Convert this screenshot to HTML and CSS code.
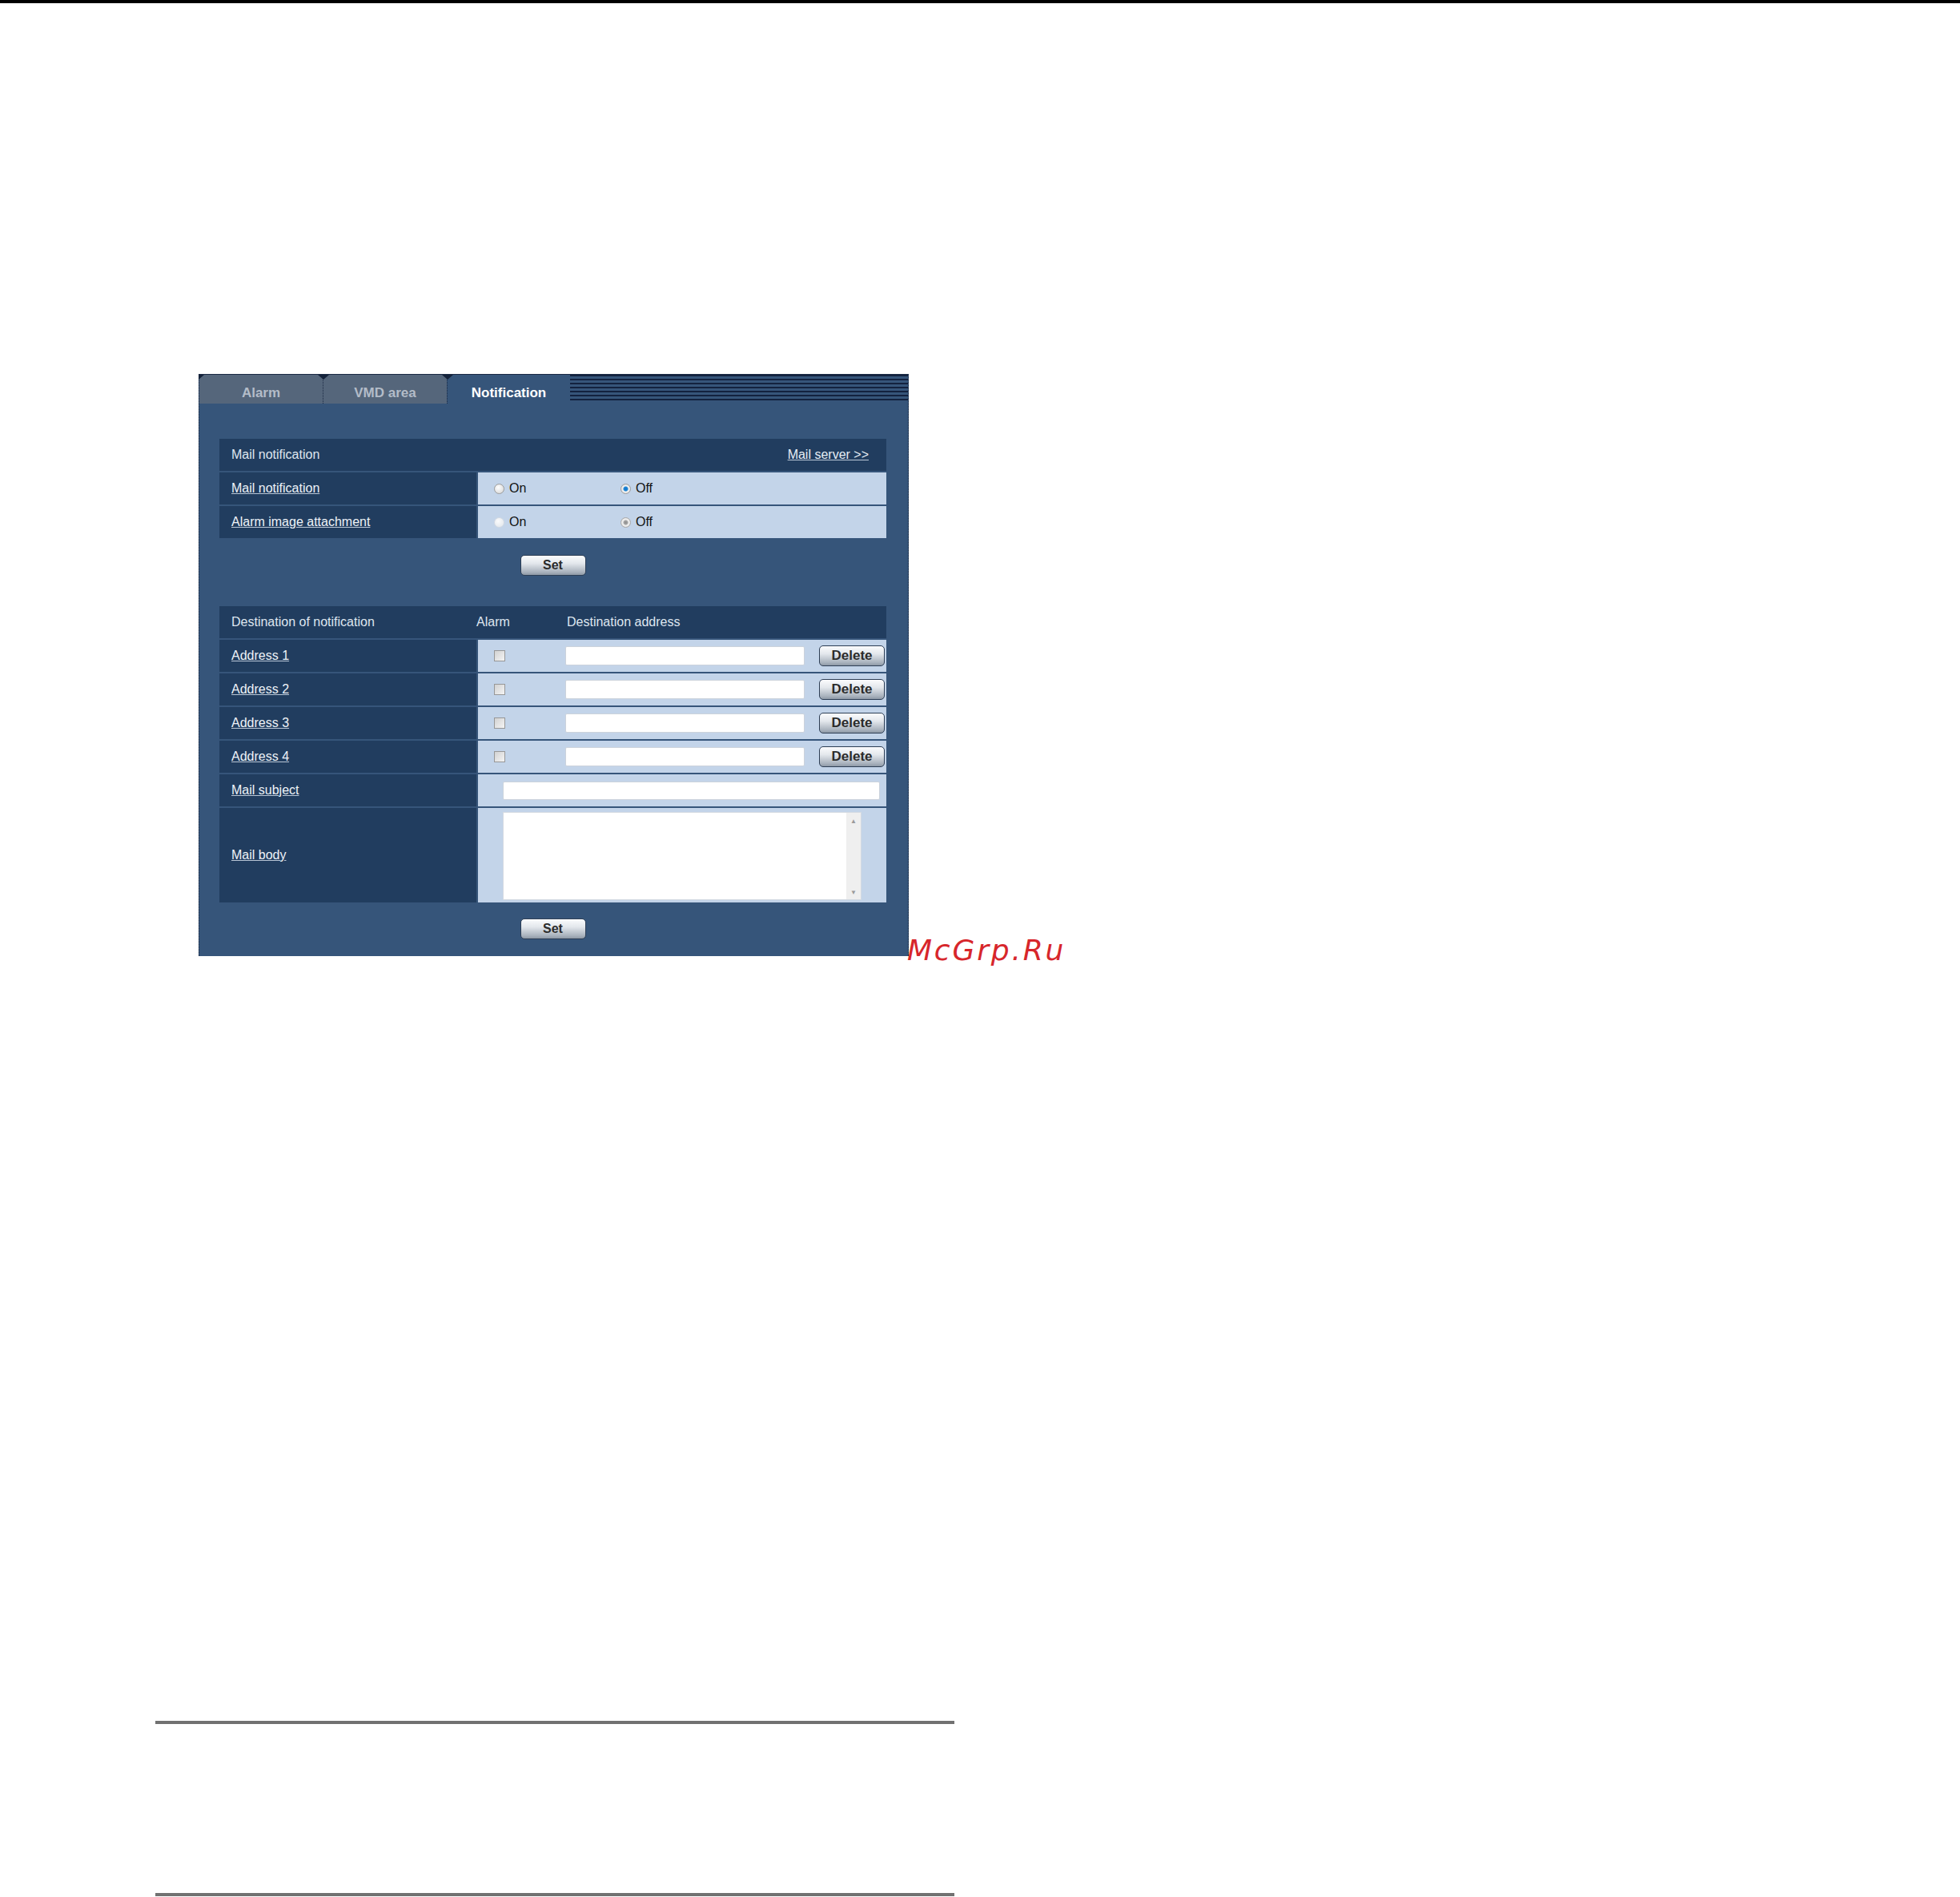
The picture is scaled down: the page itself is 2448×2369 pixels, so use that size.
FILE: index.html
```html
<!DOCTYPE html>
<html lang="en">
<head>
    <meta charset="UTF-8">
    <title>Notification</title>
    <link rel="stylesheet" href="styles.css">
</head>
<body>
    <div class="topbar"></div>

    <div class="panel">
        <div class="tabs">
            <div class="tab first">Alarm</div>
            <div class="tab">VMD area</div>
            <div class="tab active">Notification</div>
            <div class="tab-fill"></div>
        </div>

        <div class="content">
            <!-- Mail notification -->
            <div class="grid">
                <div class="head">
                    <span class="head-title">Mail notification</span>
                    <a href="#" class="link server">Mail server &gt;&gt;</a>
                </div>
                <div class="label"><a href="#" class="link">Mail notification</a></div>
                <div class="value">
                    <label class="opt"><span class="radio"></span>On</label>
                    <label class="opt"><span class="radio checked"></span>Off</label>
                </div>
                <div class="label"><a href="#" class="link">Alarm image attachment</a></div>
                <div class="value">
                    <label class="opt"><span class="radio dim"></span>On</label>
                    <label class="opt"><span class="radio dim checked"></span>Off</label>
                </div>
            </div>
            <div class="actions">
                <button class="btn">Set</button>
            </div>

            <!-- Destination of notification -->
            <div class="grid">
                <div class="head">
                    <span class="col-dest">Destination of notification</span>
                    <span class="col-alarm">Alarm</span>
                    <span>Destination address</span>
                </div>

                <div class="label"><a href="#" class="link">Address 1</a></div>
                <div class="value">
                    <span class="check"></span>
                    <input type="text" class="email">
                    <button class="btn small">Delete</button>
                </div>
                <div class="label"><a href="#" class="link">Address 2</a></div>
                <div class="value">
                    <span class="check"></span>
                    <input type="text" class="email">
                    <button class="btn small">Delete</button>
                </div>
                <div class="label"><a href="#" class="link">Address 3</a></div>
                <div class="value">
                    <span class="check"></span>
                    <input type="text" class="email">
                    <button class="btn small">Delete</button>
                </div>
                <div class="label"><a href="#" class="link">Address 4</a></div>
                <div class="value">
                    <span class="check"></span>
                    <input type="text" class="email">
                    <button class="btn small">Delete</button>
                </div>

                <div class="label"><a href="#" class="link">Mail subject</a></div>
                <div class="value">
                    <input type="text" class="subject">
                </div>

                <div class="label tall"><a href="#" class="link">Mail body</a></div>
                <div class="value top">
                    <div class="body-box">
                        <div class="body-text"></div>
                        <div class="scrollbar">
                            <span>&#9650;</span>
                            <span>&#9660;</span>
                        </div>
                    </div>
                </div>
            </div>
            <div class="actions last">
                <button class="btn">Set</button>
            </div>
        </div>
    </div>

    <div class="watermark">McGrp.Ru</div>

    <div class="rule first"></div>
    <div class="rule"></div>
</body>
</html>
```

FILE: styles.css
```css
body {
    margin: 0;
    background: #fff;
    font-family: "Liberation Sans", Arial, sans-serif;
}
.topbar {
    height: 4px;
    background: #000;
}
/* Panel */
.panel {
    width: 885px;
    margin: 463px 0 0 248px;
    background: #36557a;
    border-left: 1px dotted #14223a;
    border-right: 1px dotted #14223a;
}
.tabs {
    display: flex;
    height: 36px;
    border-top: 1px solid #1b2a44;
}
.tab {
    position: relative;
    width: 154px;
    box-sizing: border-box;
    padding-top: 9px;
    border-left: 1px dotted #1b2a44;
    background: #55667b;
    color: #b3bcc8;
    font-size: 17px;
    font-weight: bold;
    line-height: 27px;
    text-align: center;
}
.tab + .tab {
    width: 155px;
}
.tab.first {
    border-left: none;
}
.tab.active {
    width: 154px;
    background: #36557a;
    color: #fff;
}
.tab::before {
    content: "";
    position: absolute;
    top: 0;
    left: -7px;
    border-left: 7px solid transparent;
    border-right: 7px solid transparent;
    border-top: 6px solid #14223a;
}
.tab.first::before {
    left: -1px;
    border-left: none;
}
.tab-fill {
    flex: 1;
    margin-bottom: 2px;
    background: repeating-linear-gradient(to bottom, #13223f 0, #13223f 2px, #36557a 2px, #36557a 5px);
}
.content {
    padding: 44px 27px 21px 25px;
}
/* Setting tables */
.grid {
    display: grid;
    grid-template-columns: 321px 510px;
    gap: 2px;
    font-size: 16px;
}
.head {
    grid-column: 1 / -1;
    display: flex;
    align-items: center;
    height: 40px;
    padding: 0 22px 0 15px;
    background: #213d5f;
    color: #dfe6ef;
}
.head-title {
    flex: 1;
}
.col-dest {
    width: 306px;
}
.col-alarm {
    width: 113px;
}
.label {
    display: flex;
    align-items: center;
    height: 40px;
    padding-left: 15px;
    background: #213d5f;
}
.label.tall {
    height: 118px;
}
.value {
    display: flex;
    align-items: center;
    padding-left: 20px;
    background: #c3d4e9;
    color: #111;
}
.value.top {
    align-items: flex-start;
}
.link {
    color: #eef3f8;
    text-decoration: underline;
    text-decoration-color: #b9c6d6;
}
.server {
    color: #e6edf5;
}
/* Radios and checkboxes */
.opt {
    display: flex;
    align-items: center;
    width: 158px;
}
.radio {
    width: 13px;
    height: 13px;
    margin-right: 6px;
    box-sizing: border-box;
    border: 1px solid #9c9c9c;
    border-radius: 50%;
    background: radial-gradient(circle at 40% 35%, #fff, #d2d2d2);
}
.radio.checked {
    background: radial-gradient(circle, #1576c8 0, #1e86d6 2.5px, #f0f0f0 3.5px, #d8d8d8);
}
.radio.dim {
    border-color: #d3dae3;
    background: radial-gradient(circle at 40% 35%, #fafbfc, #dfe4ea);
}
.radio.dim.checked {
    border-color: #a9a9a9;
    background: radial-gradient(circle, #8f8f8f 0, #a5a5a5 2.5px, #f0f0f0 3.5px, #d8d8d8);
}
.check {
    width: 14px;
    height: 14px;
    box-sizing: border-box;
    border: 1px solid #979797;
    background: linear-gradient(135deg, #d2d2d2, #f4f4f4);
}
/* Inputs */
.email, .subject {
    box-sizing: border-box;
    margin: 0;
    border: 1px solid #ccd3dc;
    border-radius: 2px;
    background: #fff;
}
.email {
    width: 299px;
    height: 24px;
    margin-left: 75px;
}
.subject {
    width: 471px;
    height: 23px;
    margin-left: 11px;
}
.body-box {
    display: flex;
    width: 448px;
    height: 110px;
    margin: 5px 0 0 11px;
    box-sizing: border-box;
    border: 1px solid #d4dae2;
    background: #fff;
}
.body-text {
    flex: 1;
}
.scrollbar {
    display: flex;
    flex-direction: column;
    justify-content: space-between;
    width: 18px;
    padding: 6px 0 4px;
    background: #efefef;
    color: #9a9a9a;
    font-size: 8px;
    text-align: center;
}
/* Buttons */
.actions {
    display: flex;
    justify-content: center;
    margin: 21px 0 38px;
}
.actions.last {
    margin: 20px 0 0;
}
.btn {
    width: 82px;
    height: 26px;
    padding: 0;
    border: 1px solid #2d3e55;
    border-radius: 5px;
    background: linear-gradient(#fbfcfd, #e3e7ec 40%, #a9b2bd 85%, #8e99a6);
    color: #2b2b2b;
    font-family: "Liberation Sans", Arial, sans-serif;
    font-size: 16px;
    font-weight: bold;
}
.btn.small {
    margin-left: 18px;
    font-size: 17px;
}
/* Watermark */
.watermark {
    position: absolute;
    left: 1133px;
    top: 1166px;
    color: #d7262b;
    font-family: "DejaVu Sans", sans-serif;
    font-size: 36px;
    font-style: italic;
    letter-spacing: 2.8px;
}
/* Footer rules */
.rule {
    width: 998px;
    height: 4px;
    margin: 211px 0 0 194px;
    background: #717171;
}
.rule.first {
    margin-top: 955px;
}
```
